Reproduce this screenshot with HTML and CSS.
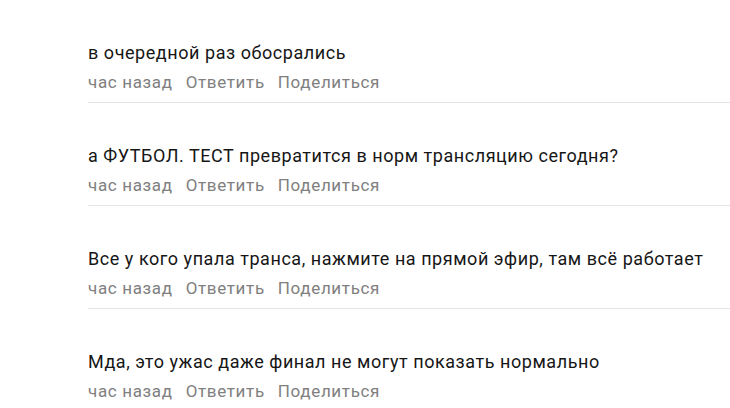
FILE: index.html
```html
<!DOCTYPE html>
<html lang="ru">
<head>
<meta charset="utf-8">
<link rel="stylesheet" href="styles.css">
</head>
<body>
<div class="comments">
  <div class="comment">
    <div class="text">в очередной раз обосрались</div>
    <div class="meta"><span>час назад</span><span>Ответить</span><span>Поделиться</span></div>
  </div>
  <div class="comment">
    <div class="text">а ФУТБОЛ. ТЕСТ превратится в норм трансляцию сегодня?</div>
    <div class="meta"><span>час назад</span><span>Ответить</span><span>Поделиться</span></div>
  </div>
  <div class="comment">
    <div class="text">Все у кого упала транса, нажмите на прямой эфир, там всё работает</div>
    <div class="meta"><span>час назад</span><span>Ответить</span><span>Поделиться</span></div>
  </div>
  <div class="comment">
    <div class="text">Мда, это ужас даже финал не могут показать нормально</div>
    <div class="meta"><span>час назад</span><span>Ответить</span><span>Поделиться</span></div>
  </div>
</div>
</body>
</html>
```
FILE: styles.css
```css
html, body {
  margin: 0;
  padding: 0;
  background: #fff;
}
body {
  width: 730px;
  height: 408px;
  overflow: hidden;
  font-family: Roboto, "Noto Sans", sans-serif;
}
.comments {
  padding-left: 88px;
}
.comment {
  padding-top: 42px;
  padding-bottom: 10px;
  border-bottom: 1px solid #e3e4e8;
}
.text {
  font-size: 18px;
  line-height: 22px;
  letter-spacing: 0.55px;
  color: #161616;
}
.meta {
  margin-top: 8px;
  font-size: 17px;
  line-height: 20px;
  letter-spacing: 0.65px;
  color: #808080;
  display: flex;
  gap: 13px;
}
```
